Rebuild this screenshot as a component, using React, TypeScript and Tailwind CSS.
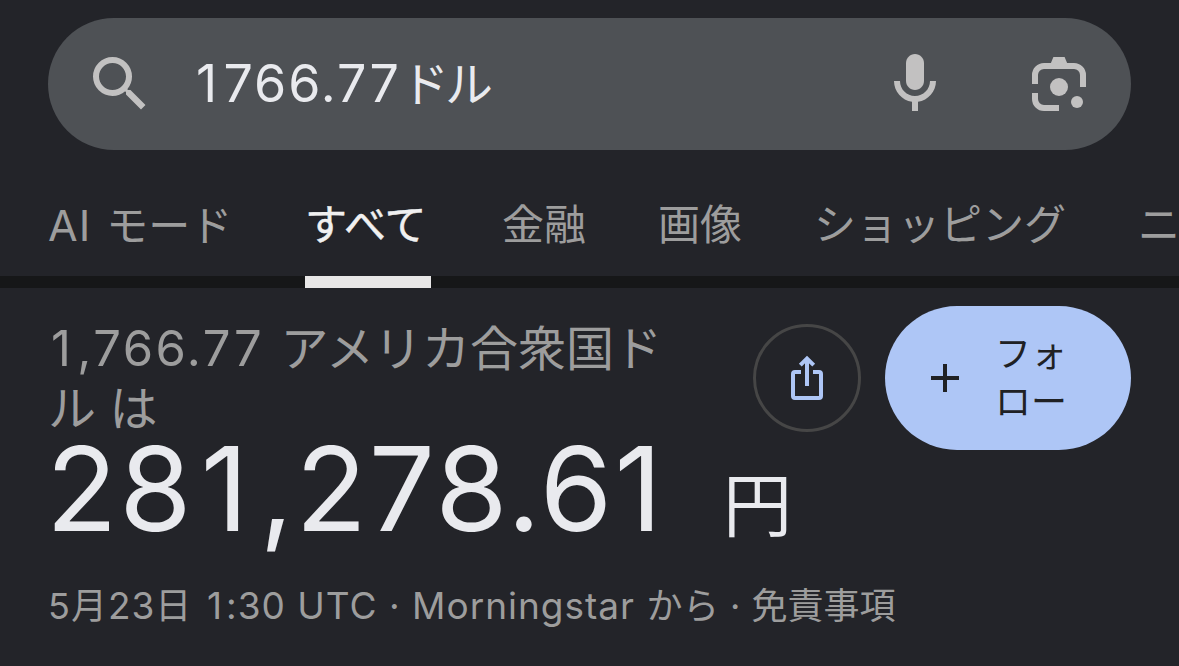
import React from 'react';

interface Tab {
  label: React.ReactNode;
  id: string;
  width: string;
  active?: boolean;
}

const tabs: Tab[] = [
  { id: 'ai', label: <><span className="text-[43px] tracking-[1px]">AI </span><span className="ml-0.5">モード</span></>, width: 'w-[257px]' },
  { id: 'all', label: 'すべて', width: 'w-[197px]', active: true },
  { id: 'finance', label: '金融', width: 'w-[156px]' },
  { id: 'images', label: '画像', width: 'w-[156px]' },
  { id: 'shopping', label: 'ショッピング', width: 'w-[324px]' },
  { id: 'news', label: 'ニュース', width: 'w-[168px]' },
];

const SearchIcon = () => (
  <svg className="w-[72px] h-[72px] shrink-0" viewBox="0 0 24 24" fill="#c2c1c1">
    <path d="M15.5 14h-.79l-.28-.27A6.471 6.471 0 0 0 16 9.5 6.5 6.5 0 1 0 9.5 16c1.61 0 3.09-.59 4.23-1.57l.27.28v.79l5 4.99L20.49 19l-4.99-5zm-6 0C7.01 14 5 11.99 5 9.5S7.01 5 9.5 5 14 7.01 14 9.5 11.99 14 9.5 14z" />
  </svg>
);

const MicIcon = () => (
  <svg className="w-[72px] h-[72px] shrink-0" viewBox="0 0 24 24" fill="#c2c1c1">
    <path d="M12 14c1.66 0 3-1.34 3-3V5c0-1.66-1.34-3-3-3S9 3.34 9 5v6c0 1.66 1.34 3 3 3z" />
    <path d="M17 11c0 2.76-2.24 5-5 5s-5-2.24-5-5H5c0 3.53 2.61 6.43 6 6.92V21h2v-3.08c3.39-.49 6-3.39 6-6.92h-2z" />
  </svg>
);

const LensIcon = () => (
  <svg className="w-[72px] h-[72px] shrink-0" viewBox="0 0 72 72" fill="#c2c1c1">
    <path d="M27.5 16 30.4 9h11.2l2.9 7z" />
    <path
      d="M12 36V27a9 9 0 0 1 9-9h30a9 9 0 0 1 9 9v12M12 45v6a9 9 0 0 0 9 9h15"
      fill="none"
      stroke="#c2c1c1"
      strokeWidth="6"
    />
    <circle cx="36" cy="39" r="9" />
    <circle cx="54" cy="54" r="6" />
  </svg>
);

// The proportional "1" is narrow, so it gets room on both sides
const One = () => <span className="pl-[0.06em] pr-[0.08em]">1</span>;

const SearchBar = () => (
  <div className="mx-12 mt-[18px] h-[132px] shrink-0 rounded-full bg-[#4e5155] flex items-center px-9">
    <SearchIcon />
    <div className="ml-[37px] pb-px flex-1 whitespace-nowrap text-[52px] leading-none text-[#e9eaee]">
      <span className="tracking-[2px]"><One />766.77</span>
      <span className="text-[48px] tracking-[-4px]">ドル</span>
    </div>
    <MicIcon />
    <div className="w-[72px]" />
    <LensIcon />
  </div>
);

const Tabs = () => (
  <nav className="mt-[42px] h-24 shrink-0 flex overflow-hidden whitespace-nowrap bg-[linear-gradient(to_top,#161718_12px,transparent_12px)] pl-12">
    {tabs.map((t) => (
      <div key={t.id} className={`${t.width} shrink-0`}>
        <div
          className={`inline-block h-24 pt-[3px] text-[42px] leading-[60px] ${
            t.active ? 'w-[126px] border-b-[12px] border-[#e8e7e7] text-[#f0f0f0] [-webkit-text-stroke:0.5px]' : 'text-[#9d9d9d]'
          }`}
        >
          {t.label}
        </div>
      </div>
    ))}
  </nav>
);

const Actions = () => (
  <div className="flex items-center gap-6">
    <button className="w-[108px] h-[108px] rounded-full border-[3px] border-[#464646]">
      <svg className="w-[102px] h-[102px]" viewBox="3 3 102 102" fill="none" stroke="#aec6f6" strokeWidth="4">
        <path d="M48 48h-6a2 2 0 0 0-2 2v22a2 2 0 0 0 2 2h24a2 2 0 0 0 2-2V50a2 2 0 0 0-2-2h-6" />
        <path d="M54 62V35M47.3 41.2 54 34.5l6.7 6.7" />
      </svg>
    </button>
    <button className="w-[246px] h-36 rounded-full bg-[#aec6f6] flex items-center pl-[46px] text-[#202124]">
      <svg className="w-7 h-7" viewBox="0 0 28 28" stroke="#202124" strokeWidth="4">
        <path d="M14 0v28M0 14h28" />
      </svg>
      <span className="ml-9 text-left text-[36px] leading-[48px]">
        フォ
        <br />
        ロー
      </span>
    </button>
  </div>
);

export default function App() {
  return (
    <div className="w-full h-[666px] overflow-hidden flex flex-col bg-[#232429] font-['Inter','Noto_Sans_CJK_JP',sans-serif]">
      <SearchBar />
      <Tabs />

      <div className="flex justify-between pl-12 pr-12 pt-[18px]">
        <div className="pt-[13px] text-[48px] leading-[60px] text-[#9d9d9d] whitespace-nowrap">
          <span className="text-[49px] tracking-[2.5px]"><One />,766.77 </span>アメリカ合衆国ド
          <br />
          ル は
        </div>
        <Actions />
      </div>

      <div className="-mt-[29px] ml-[46px] h-[136px] flex items-baseline text-[#e9eaee] leading-[136px] whitespace-nowrap">
        <span className="text-[117px] tracking-[2px]">28<One />,278.61</span>
        <span className="ml-[59px] text-[69px]">円</span>
      </div>

      <div className="mt-[19px] ml-12 text-[36px] leading-[60px] text-[#9d9d9d] whitespace-nowrap">
        <span className="tracking-[1px]">5月</span><span className="text-[37px] tracking-[1px]">23</span>日
        <span className="ml-0.5 text-[37px] tracking-[1px]"> <One />:30 UTC · Morningstar </span>
        <span className="tracking-[0.5px]">から · </span>免責事項
      </div>
    </div>
  );
}
